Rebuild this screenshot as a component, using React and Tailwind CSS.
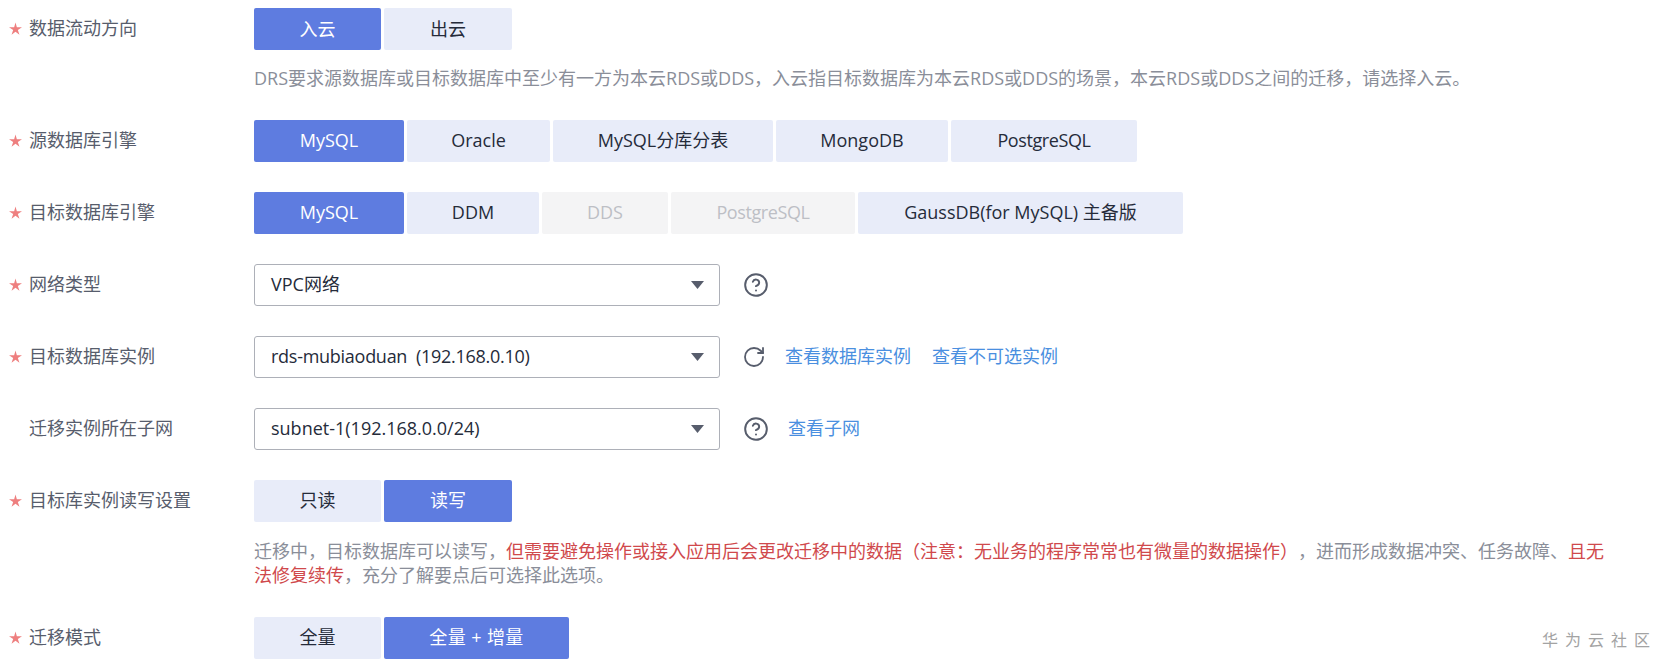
import React from "react";
import { HelpCircle, RotateCw } from "lucide-react";

// Estrella de campo obligatorio
const Star = () => (
    <svg className="w-[13px] h-[13px] shrink-0 ml-[9px] mr-[7px]" viewBox="0 0 24 24" fill="#ee7f7f">
        <polygon points="12,1 14.500,9.500 24,9.500 16.300,14.800 19.300,23.500 12,18 4.700,23.500 7.700,14.800 0,9.500 9.500,9.500" />
    </svg>
);

const Row = ({ label, required = true, children }) => (
    <div className="flex items-start mb-[30px] last:mb-0">
        <div className="w-[254px] h-[42px] shrink-0 flex items-center text-[#575d6c] pb-[1px]">
            {required ? <Star /> : <span className="w-[29px]" />}
            {label}
        </div>
        <div className="flex-1 min-w-0">{children}</div>
    </div>
);

// Cada opción: { text, width, spacing?, disabled? }
const Options = ({ items, active }) => (
    <div className="flex gap-[3px]">
        {items.map((item, i) => {
            let color = "bg-[#e8ecf9] text-[#252b3a]";
            if (i === active) color = "bg-[#5e7ce0] text-white";
            if (item.disabled) color = "bg-[#f4f4f5] text-[#bdbfc5]";
            return (
                <div
                    key={item.text}
                    className={`h-[42px] flex items-center justify-center whitespace-pre rounded-[2px] ${item.width} ${item.spacing || ""} ${color}`}
                >
                    {item.text}
                </div>
            );
        })}
    </div>
);

const Select = ({ value, tight }) => (
    <div className="w-[466px] h-[42px] pl-[16px] pr-[15px] flex items-center justify-between border border-[#adb0b8] rounded-[3px] text-[#252b3a]">
        <span className={`whitespace-pre ${tight ? "tracking-[-0.27px]" : ""}`}>{value}</span>
        <svg className="w-[13px] h-[8px]" viewBox="0 0 13 8" fill="#575d6c">
            <polygon points="0,0 13,0 6.500,8" />
        </svg>
    </div>
);

const Help = ({ className, children }) => (
    <p className={`${className} w-[1353px] leading-[24.5px] text-[#8a8e99] [text-spacing-trim:space-all]`}>{children}</p>
);

const Link = ({ children }) => <span className="text-[#4a8fe0]">{children}</span>;

const App = () => (
    <div className="relative w-[1662px] h-[667px] overflow-hidden bg-white pt-[8px] text-[18px] font-['Open_Sans','Noto_Sans_CJK_SC',sans-serif]">
        <Row label="数据流动方向">
            <Options
                active={0}
                items={[
                    { text: "入云", width: "w-[127px]" },
                    { text: "出云", width: "w-[128px]" },
                ]}
            />
            <Help className="mt-[16px] mb-[-1px]">DRS要求源数据库或目标数据库中至少有一方为本云RDS或DDS，入云指目标数据库为本云RDS或DDS的场景，本云RDS或DDS之间的迁移，请选择入云。</Help>
        </Row>
        <Row label="源数据库引擎">
            <Options
                active={0}
                items={[
                    { text: "MySQL", width: "w-[150px]" },
                    { text: "Oracle", width: "w-[143px]" },
                    { text: "MySQL分库分表", width: "w-[220px]" },
                    { text: "MongoDB", width: "w-[172px]" },
                    { text: "PostgreSQL", width: "w-[186px]", spacing: "tracking-[-0.4px]" },
                ]}
            />
        </Row>
        <Row label="目标数据库引擎">
            <Options
                active={0}
                items={[
                    { text: "MySQL", width: "w-[150px]" },
                    { text: "DDM", width: "w-[132px]" },
                    { text: "DDS", width: "w-[126px]", disabled: true },
                    { text: "PostgreSQL", width: "w-[184px]", spacing: "tracking-[-0.4px]", disabled: true },
                    { text: "GaussDB(for MySQL) 主备版", width: "w-[325px]" },
                ]}
            />
        </Row>
        <Row label="网络类型">
            <div className="flex items-center">
                <Select value="VPC网络" />
                <HelpCircle className="ml-[23px] w-[26px] h-[26px] text-[#575d6c]" strokeWidth={1.8} />
            </div>
        </Row>
        <Row label="目标数据库实例">
            <div className="flex items-center">
                <Select value="rds-mubiaoduan  (192.168.0.10)" tight />
                <RotateCw className="ml-[22px] w-[24px] h-[24px] text-[#575d6c]" strokeWidth={1.8} />
                <span className="ml-[19px]"><Link>查看数据库实例</Link></span>
                <span className="ml-[21px]"><Link>查看不可选实例</Link></span>
            </div>
        </Row>
        <Row label="迁移实例所在子网" required={false}>
            <div className="flex items-center">
                <Select value="subnet-1(192.168.0.0/24)" />
                <HelpCircle className="ml-[23px] w-[26px] h-[26px] text-[#575d6c]" strokeWidth={1.8} />
                <span className="ml-[19px]"><Link>查看子网</Link></span>
            </div>
        </Row>
        <Row label="目标库实例读写设置">
            <Options
                active={1}
                items={[
                    { text: "只读", width: "w-[127px]" },
                    { text: "读写", width: "w-[128px]" },
                ]}
            />
            <Help className="mt-[17px] mb-[-1px]">
                迁移中，目标数据库可以读写，
                <span className="text-[#d0494c]">但需要避免操作或接入应用后会更改迁移中的数据（注意：无业务的程序常常也有微量的数据操作）</span>
                ，进而形成数据冲突、任务故障、
                <span className="text-[#d0494c]">且无法修复续传</span>
                ，充分了解要点后可选择此选项。
            </Help>
        </Row>
        <Row label="迁移模式">
            <Options
                active={1}
                items={[
                    { text: "全量", width: "w-[127px]" },
                    { text: "全量 + 增量", width: "w-[185px]", spacing: "tracking-[0.4px]" },
                ]}
            />
        </Row>
        <div className="absolute right-[5px] bottom-[15px] text-[16px] tracking-[7px] text-[#a3a3a3]">华为云社区</div>
    </div>
);

export default App;
